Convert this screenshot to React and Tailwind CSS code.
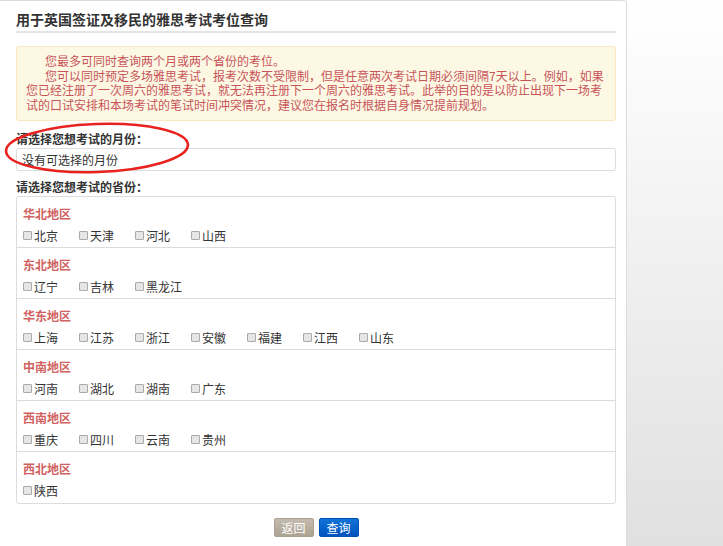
const regions = [
  { name: '华北地区', items: ['北京', '天津', '河北', '山西'] },
  { name: '东北地区', items: ['辽宁', '吉林', '黑龙江'] },
  { name: '华东地区', items: ['上海', '江苏', '浙江', '安徽', '福建', '江西', '山东'] },
  { name: '中南地区', items: ['河南', '湖北', '湖南', '广东'] },
  { name: '西南地区', items: ['重庆', '四川', '云南', '贵州'] },
  { name: '西北地区', items: ['陕西'] },
]

const font = { fontFamily: '"Noto Sans CJK SC", "Liberation Sans", sans-serif' }

function Region({ region, last }) {
  return (
    <div className={`h-[51px] px-[6px] pt-[8px] ${last ? '' : 'border-b border-[#dcdcdc]'}`}>
      <div className="text-[12px] leading-[17px] font-bold text-[#d0625f]">{region.name}</div>
      <div className="mt-[5px] flex text-[12px] leading-[17px] text-[#333]">
        {region.items.map(p => (
          <label key={p} className="flex w-[56px] items-center">
            <span className="mr-[1px] inline-block h-[9px] w-[9px] rounded-[1px] border border-[#aaa] bg-[#e6e6e6]" />
            <span className="ml-[1px]">{p}</span>
          </label>
        ))}
      </div>
    </div>
  )
}

export default function App() {
  return (
    <div className="flex min-h-[546px] w-full bg-white" style={font}>
      <div className="relative w-[627px] shrink-0 rounded-tr-[4px] border-t border-r border-[#dcdcdc] pl-[16px] pr-[10px] pt-[8px]">
        <h1 className="border-b-2 border-[#e5e5e5] pb-[2px] text-[14px] leading-[20px] font-bold text-[#333]">
          用于英国签证及移民的雅思考试考位查询
        </h1>

        <div className="mt-[13px] rounded-[3px] border border-[#f8e7c3] bg-[#fcf8e3] pl-[9px] pr-[7px] pt-[7px] pb-[8px] text-[12px] leading-[14.5px] text-[#c8545a]">
          <p className="indent-[19px]">您最多可同时查询两个月或两个省份的考位。</p>
          <p className="indent-[19px]">
            您可以同时预定多场雅思考试，报考次数不受限制，但是任意两次考试日期必须间隔7天以上。例如，如果您已经注册了一次周六的雅思考试，就无法再注册下一个周六的雅思考试。此举的目的是以防止出现下一场考试的口试安排和本场考试的笔试时间冲突情况，建议您在报名时根据自身情况提前规划。
          </p>
        </div>

        <div className="mt-[10px] text-[12px] leading-[16px] font-bold text-[#333]">请选择您想考试的月份：</div>
        <div className="mt-[1px] h-[23px] rounded-[3px] border border-[#dcdcdc] px-[5px] text-[12px] leading-[21px] text-[#333]">
          没有可选择的月份
        </div>

        <div className="mt-[8px] text-[12px] leading-[16px] font-bold text-[#333]">请选择您想考试的省份：</div>
        <div className="mt-[1px] rounded-[3px] border border-[#dcdcdc]">
          {regions.map((r, i) => (
            <Region key={r.name} region={r} last={i === regions.length - 1} />
          ))}
        </div>

        <div className="mt-[14px] flex justify-center gap-[5px] pb-[12px]">
          <button className="h-[19px] w-[40px] rounded-[2px] border border-[#a99f90] bg-gradient-to-b from-[#c3bbae] to-[#ada393] text-[12px] leading-[17px] text-white">返回</button>
          <button className="h-[19px] w-[40px] rounded-[2px] border border-[#0050b0] bg-gradient-to-b from-[#1273d6] to-[#0052bf] text-[12px] leading-[17px] text-white">查询</button>
        </div>

        <svg className="pointer-events-none absolute left-0 top-[118px]" width="200" height="60" viewBox="0 0 200 60">
          <ellipse cx="97" cy="29" rx="91" ry="24" fill="none" stroke="#e8231f" strokeWidth="2.6" transform="rotate(-2 97 29)" />
        </svg>
      </div>
      <div className="flex-1 bg-gradient-to-b from-white to-[#e0e0e0]" />
    </div>
  )
}
